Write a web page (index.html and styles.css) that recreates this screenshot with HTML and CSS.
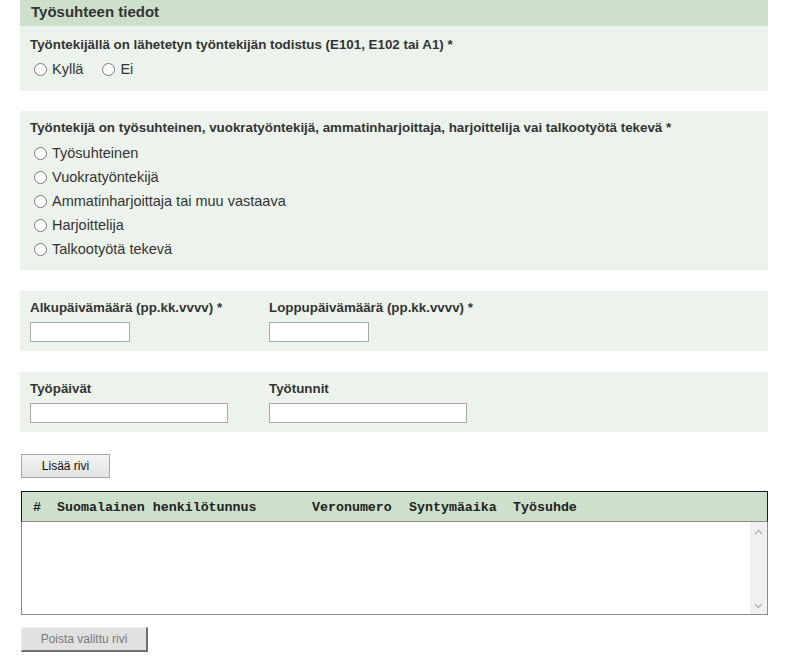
FILE: index.html
```html
<!DOCTYPE html>
<html lang="fi">
<head>
<meta charset="utf-8">
<title>Työsuhteen tiedot</title>
<link rel="stylesheet" href="styles.css">
</head>
<body>
<div class="page">
  <div class="section-title">Työsuhteen tiedot</div>

  <div class="panel panel-first">
    <div class="label">Työntekijällä on lähetetyn työntekijän todistus (E101, E102 tai A1) *</div>
    <div class="radio-inline">
      <label class="opt"><input type="radio" name="todistus"><span>Kyllä</span></label>
      <label class="opt"><input type="radio" name="todistus"><span>Ei</span></label>
    </div>
  </div>

  <div class="panel panel-second">
    <div class="label">Työntekijä on työsuhteinen, vuokratyöntekijä, ammatinharjoittaja, harjoittelija vai talkootyötä tekevä *</div>
    <div class="radio-list">
      <label class="opt"><input type="radio" name="tyyppi"><span>Työsuhteinen</span></label>
      <label class="opt"><input type="radio" name="tyyppi"><span>Vuokratyöntekijä</span></label>
      <label class="opt"><input type="radio" name="tyyppi"><span>Ammatinharjoittaja tai muu vastaava</span></label>
      <label class="opt"><input type="radio" name="tyyppi"><span>Harjoittelija</span></label>
      <label class="opt"><input type="radio" name="tyyppi"><span>Talkootyötä tekevä</span></label>
    </div>
  </div>

  <div class="panel panel-fields">
    <div class="field">
      <div class="label">Alkupäivämäärä (pp.kk.vvvv) *</div>
      <input class="text short" type="text">
    </div>
    <div class="field">
      <div class="label">Loppupäivämäärä (pp.kk.vvvv) *</div>
      <input class="text short" type="text">
    </div>
  </div>

  <div class="panel panel-fields">
    <div class="field">
      <div class="label">Työpäivät</div>
      <input class="text long" type="text">
    </div>
    <div class="field">
      <div class="label">Työtunnit</div>
      <input class="text long" type="text">
    </div>
  </div>

  <button class="btn btn-add" type="button">Lisää rivi</button>

  <div class="grid">
    <div class="grid-head">
      <span>#</span>
      <span>Suomalainen henkilötunnus</span>
      <span>Veronumero</span>
      <span>Syntymäaika</span>
      <span>Työsuhde</span>
    </div>
    <div class="grid-body">
      <div class="rows"></div>
      <div class="scrollbar">
        <svg class="arrow" width="9" height="6" viewBox="0 0 9 6"><path d="M1 5 L4.5 1.5 L8 5" fill="none" stroke="#b0b0b0" stroke-width="1.4"/></svg>
        <svg class="arrow" width="9" height="6" viewBox="0 0 9 6"><path d="M1 1 L4.5 4.5 L8 1" fill="none" stroke="#b0b0b0" stroke-width="1.4"/></svg>
      </div>
    </div>
  </div>

  <button class="btn btn-remove" type="button" disabled>Poista valittu rivi</button>
</div>
</body>
</html>
```

FILE: styles.css
```css
html, body {
  margin: 0;
  padding: 0;
  background: #ffffff;
}

body {
  font-family: "Liberation Sans", Arial, sans-serif;
  color: #333333;
}

.page {
  width: 748px;
  margin-left: 20px;
  display: flex;
  flex-direction: column;
  align-items: flex-start;
}

.section-title {
  align-self: stretch;
  height: 26px;
  line-height: 24px;
  padding-left: 11px;
  background: #cde0cb;
  font-size: 15px;
  font-weight: bold;
  color: #333333;
}

.panel {
  align-self: stretch;
  background: #ecf3ec;
  padding: 0 10px;
}

.label {
  font-size: 13.35px;
  font-weight: bold;
  line-height: 16px;
  color: #333333;
}

.panel-first {
  padding-top: 11px;
  padding-bottom: 10px;
}

.panel-first .radio-inline {
  margin-top: 4px;
  display: flex;
  gap: 15px;
}

.panel-second {
  margin-top: 20px;
  padding-top: 9px;
  padding-bottom: 9px;
}

.radio-list {
  margin-top: 5px;
  display: flex;
  flex-direction: column;
}

.opt {
  display: flex;
  align-items: center;
  height: 24px;
  font-size: 14.5px;
  color: #333333;
}

.opt input {
  appearance: none;
  -webkit-appearance: none;
  width: 13px;
  height: 13px;
  margin: 0 5px 0 4px;
  border: 1px solid #7a7a7a;
  border-radius: 50%;
  background: #ffffff;
  box-sizing: border-box;
}

.panel-fields {
  margin-top: 21px;
  padding-top: 9px;
  padding-bottom: 9px;
  display: flex;
}

.field {
  width: 239px;
  display: flex;
  flex-direction: column;
  align-items: flex-start;
}

.field .label {
  margin-bottom: 6px;
}

.text {
  height: 20px;
  box-sizing: border-box;
  border: 1px solid #a9a9a9;
  background: #ffffff;
  padding: 0 3px;
  margin: 0;
  font: 13px "Liberation Sans", Arial, sans-serif;
}

.text.short {
  width: 100px;
}

.text.long {
  width: 198px;
}

.btn {
  font-family: "Liberation Sans", Arial, sans-serif;
  font-size: 12px;
  box-sizing: border-box;
  margin-left: 1px;
  padding: 0;
}

.btn-add {
  margin-top: 22px;
  width: 89px;
  height: 24px;
  border: 1px solid #a8a8a8;
  background: linear-gradient(#f4f4f4, #e2e2e2);
  color: #111111;
}

.grid {
  margin-top: 13px;
  margin-left: 1px;
  width: 747px;
  display: flex;
  flex-direction: column;
}

.grid-head {
  height: 31px;
  box-sizing: border-box;
  background: #cde0cb;
  border: 1px solid #1a1a1a;
  border-bottom: 1px solid #8a8a8a;
  display: grid;
  grid-template-columns: 24px 255px 97px 104px 1fr;
  align-items: center;
  padding-left: 11px;
  padding-top: 1px;
  font-family: "Liberation Mono", "Courier New", monospace;
  font-weight: bold;
  font-size: 13.3px;
  color: #222222;
}

.grid-body {
  height: 93px;
  box-sizing: border-box;
  border: 1px solid #8a8a8a;
  border-top: none;
  display: flex;
}

.rows {
  flex: 1;
}

.scrollbar {
  width: 17px;
  background: #f0f0f0;
  display: flex;
  flex-direction: column;
  justify-content: space-between;
  align-items: center;
  padding: 7px 0 5px;
}

.btn-remove {
  margin-top: 12px;
  width: 127px;
  height: 25px;
  background: #e1e1e1;
  border-top: 1px solid #efefef;
  border-left: 1px solid #efefef;
  border-right: 2px solid #6e6e6e;
  border-bottom: 2px solid #6e6e6e;
  color: #7a7a7a;
}
```
